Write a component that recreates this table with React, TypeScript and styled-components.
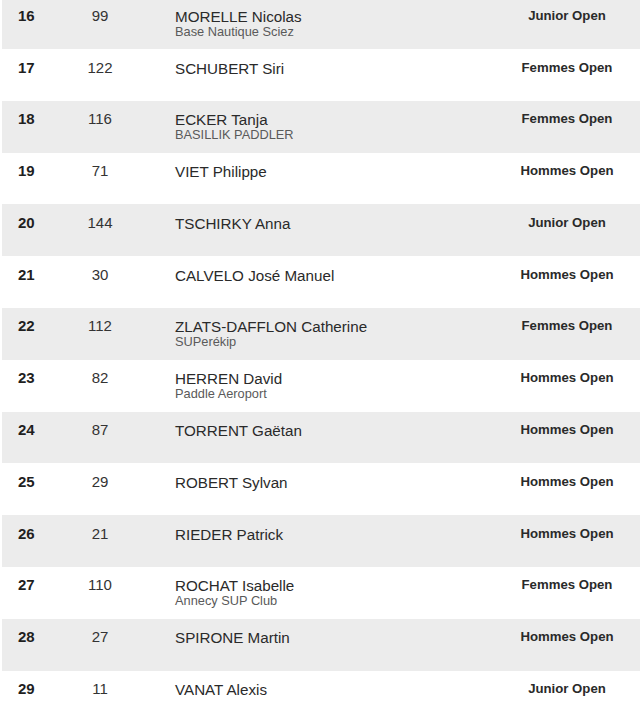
import React from 'react';
import styled, { createGlobalStyle } from 'styled-components';

const GlobalStyle = createGlobalStyle`
  html, body {
    margin: 0;
    padding: 0;
    background: #ffffff;
    overflow: hidden;
  }
  body {
    font-family: 'Liberation Sans', Arial, sans-serif;
    color: #222222;
  }
`;

const ResultsList = styled.div`
  margin-top: -2.8px;
  padding-left: 2px;
`;

const ResultRow = styled.div<{ shaded: boolean }>`
  display: grid;
  grid-template-columns: 58px 80px 1fr 140px;
  align-items: start;
  box-sizing: border-box;
  height: 51.8px;
  padding: 10.5px 3px 0 0;
  background-color: ${({ shaded }) => (shaded ? '#ececec' : '#ffffff')};
`;

const RankCell = styled.div`
  padding-left: 16px;
  font-size: 15px;
  line-height: 15px;
  font-weight: 700;
  color: #1f1f1f;
`;

const BibCell = styled.div`
  text-align: center;
  font-size: 15px;
  line-height: 15px;
  color: #333333;
`;

const NameCell = styled.div`
  display: flex;
  flex-direction: column;
  padding-left: 35px;
`;

const AthleteName = styled.span`
  font-size: 15.2px;
  line-height: 17px;
  color: #2a2a2a;
`;

const ClubName = styled.span`
  font-size: 12.8px;
  line-height: 14px;
  color: #5a5a5a;
`;

const CategoryCell = styled.div`
  text-align: center;
  font-size: 13.2px;
  line-height: 15px;
  font-weight: 700;
  color: #2a2a2a;
`;

interface Result {
  rank: number;
  bib: number;
  name: string;
  club?: string;
  category: string;
}

const results: Result[] = [
  { rank: 16, bib: 99, name: 'MORELLE Nicolas', club: 'Base Nautique Sciez', category: 'Junior Open' },
  { rank: 17, bib: 122, name: 'SCHUBERT Siri', category: 'Femmes Open' },
  { rank: 18, bib: 116, name: 'ECKER Tanja', club: 'BASILLIK PADDLER', category: 'Femmes Open' },
  { rank: 19, bib: 71, name: 'VIET Philippe', category: 'Hommes Open' },
  { rank: 20, bib: 144, name: 'TSCHIRKY Anna', category: 'Junior Open' },
  { rank: 21, bib: 30, name: 'CALVELO José Manuel', category: 'Hommes Open' },
  { rank: 22, bib: 112, name: 'ZLATS-DAFFLON Catherine', club: 'SUPerékip', category: 'Femmes Open' },
  { rank: 23, bib: 82, name: 'HERREN David', club: 'Paddle Aeroport', category: 'Hommes Open' },
  { rank: 24, bib: 87, name: 'TORRENT Gaëtan', category: 'Hommes Open' },
  { rank: 25, bib: 29, name: 'ROBERT Sylvan', category: 'Hommes Open' },
  { rank: 26, bib: 21, name: 'RIEDER Patrick', category: 'Hommes Open' },
  { rank: 27, bib: 110, name: 'ROCHAT Isabelle', club: 'Annecy SUP Club', category: 'Femmes Open' },
  { rank: 28, bib: 27, name: 'SPIRONE Martin', category: 'Hommes Open' },
  { rank: 29, bib: 11, name: 'VANAT Alexis', category: 'Junior Open' },
];

export default function App() {
  return (
    <>
      <GlobalStyle />
      <ResultsList>
        {results.map((r, i) => (
          <ResultRow key={r.rank} shaded={i % 2 === 0}>
            <RankCell>{r.rank}</RankCell>
            <BibCell>{r.bib}</BibCell>
            <NameCell>
              <AthleteName>{r.name}</AthleteName>
              {r.club && <ClubName>{r.club}</ClubName>}
            </NameCell>
            <CategoryCell>{r.category}</CategoryCell>
          </ResultRow>
        ))}
      </ResultsList>
    </>
  );
}
